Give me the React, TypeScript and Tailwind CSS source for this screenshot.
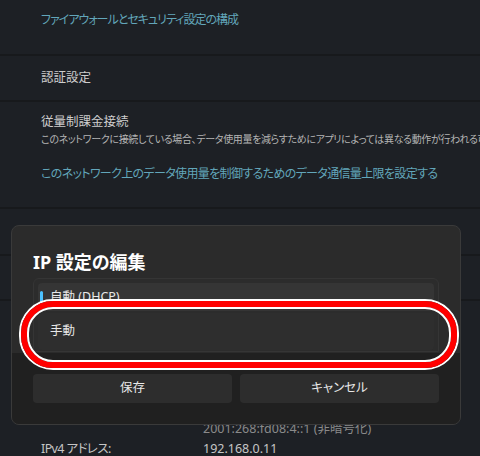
import React from "react";

const font = "[font-family:'Noto_Sans','Noto_Sans_CJK_JP',sans-serif] [font-feature-settings:'palt']";

function Sep() {
  return <div className="h-[2px] bg-[#17191c]" />;
}

export default function App() {
  return (
    <div className={`relative w-[480px] h-[456px] overflow-hidden bg-[#1d2025] ${font}`}>
      {/* background settings page */}
      <div className="flex flex-col">
        <div className="h-[54px] pl-[41px] pt-[10px] text-[12px] tracking-[-1px] leading-[20px] text-[#62a6ba]">
          ファイアウォールとセキュリティ設定の構成
        </div>
        <Sep />
        <div className="h-[44px] pl-[41px] flex items-center text-[12.5px] text-[#cdcdcd]">
          認証設定
        </div>
        <Sep />
        <div className="h-[105px] pl-[41px] pt-[11px] flex flex-col whitespace-nowrap overflow-hidden">
          <div className="text-[12.5px] leading-[18px] text-[#cdcdcd]">従量制課金接続</div>
          <div className="text-[10px] tracking-[-0.35px] leading-[16px] text-[#b4b4b4]">
            このネットワークに接続している場合、データ使用量を減らすためにアプリによっては異なる動作が行われる可能性があります
          </div>
          <div className="mt-[18px] text-[12px] tracking-[-0.65px] leading-[18px] text-[#62a6ba]">
            このネットワーク上のデータ使用量を制御するためのデータ通信量上限を設定する
          </div>
        </div>
        <Sep />
        <div className="h-[45px]" />
        <Sep />
        <div className="h-[43px]" />
        <Sep />
        <div className="pl-[41px] pt-[118px] grid grid-cols-[162px_1fr] text-[12.5px] leading-[20px] whitespace-nowrap">
          <div />
          <div className="text-[#8a8a8a]">2001:268:fd08:4::1 (非暗号化)</div>
          <div className="text-[#c6c6c6] tracking-[-0.6px]">IPv4 アドレス:</div>
          <div className="text-[#c6c6c6]">192.168.0.11</div>
        </div>
      </div>

      {/* dialog */}
      <div className="absolute left-[11px] top-[225px] w-[450px] h-[200px] rounded-[8px] border border-[#3a3a3a] bg-[#2b2b2b] overflow-hidden flex flex-col">
        <div className="px-[21px] pt-[24px] h-[127px] flex flex-col">
          <div className="text-[18px] leading-[24px] font-bold text-white">IP 設定の編集</div>
          <div className="mt-[4px] h-[74px] rounded-t-[6px] border border-[#353535] bg-[#2c2c2c] px-[4px] pt-[4px] flex flex-col gap-[2px]">
            <div className="relative h-[28px] rounded-[4px] bg-[#353535] flex items-center pl-[12px] text-[12.5px] text-[#e8e8e8]">
              <div className="absolute left-[2px] top-[8px] h-[12px] w-[3px] rounded-full bg-[#4cc2ff]" />
              自動 (DHCP)
            </div>
            <div className="h-[37px] rounded-[4px] bg-[#2e2e2e] flex items-center pl-[12px] text-[12.5px] text-[#e8e8e8]">
              手動
            </div>
          </div>
        </div>
        <div className="flex-1 bg-[#202020] px-[21px] pt-[21px] flex gap-[8px]">
          <button className="flex-1 h-[29px] rounded-[4px] bg-[#2d2d2d] text-[12.5px] text-[#e8e8e8]">保存</button>
          <button className="flex-1 h-[29px] rounded-[4px] bg-[#2d2d2d] text-[12.5px] text-[#e8e8e8]">キャンセル</button>
        </div>
      </div>

      {/* red annotation */}
      <div className="absolute left-[19px] top-[299px] w-[440px] h-[71px] rounded-[34px] border-[2px] border-white">
        <div className="w-full h-full rounded-[32px] border-[6px] border-[#ff0000]">
          <div className="w-full h-full rounded-[26px] border-[2px] border-white" />
        </div>
      </div>
    </div>
  );
}
